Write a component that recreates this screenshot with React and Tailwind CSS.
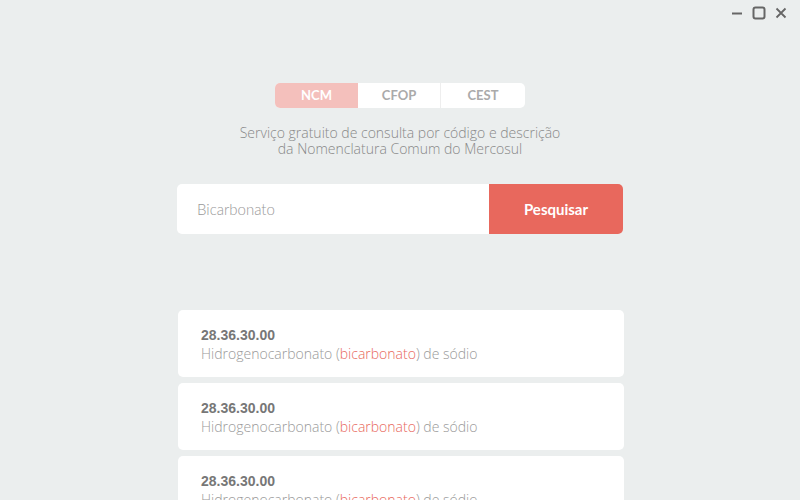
import React from "react";

const Card = () => (
  <div className="w-[446px] h-[67px] shrink-0 bg-white rounded-[5px] pl-[23px] pt-[16px]">
    <div className="text-[14px] font-bold text-[#777] leading-[18px]" style={{ fontFamily: '"Liberation Sans", Arial, sans-serif' }}>28.36.30.00</div>
    <div className="text-[14px] font-light text-[#999] leading-[18px] mt-[1px]" style={{ fontFamily: '"Open Sans", sans-serif' }}>
      Hidrogenocarbonato (<span className="text-[#e8685d]">bicarbonato</span>) de sódio
    </div>
  </div>
);

export default function App() {
  return (
    <div className="w-[800px] h-[500px] bg-[#ebeeee] overflow-hidden flex flex-col relative" style={{ fontFamily: 'Lato, sans-serif' }}>
      <div className="absolute top-[6px] right-[12px] flex items-center gap-[8px] text-[#666]">
        <svg width="14" height="14" viewBox="0 0 14 14"><path d="M2 7.5h10" stroke="#666" strokeWidth="2" /></svg>
        <svg width="14" height="14" viewBox="0 0 14 14"><rect x="1.5" y="1.5" width="11" height="11" rx="2" fill="none" stroke="#666" strokeWidth="2" /></svg>
        <svg width="14" height="14" viewBox="0 0 14 14"><path d="M2.5 2.5l9 9M11.5 2.5l-9 9" stroke="#666" strokeWidth="1.8" /></svg>
      </div>
      <div className="flex justify-center pt-[83px]">
        <div className="flex w-[250px] h-[25px] bg-white rounded-[5px] overflow-hidden text-[13px] font-bold">
          <div className="w-[83px] flex items-center justify-center bg-[#f4c0bc] text-white">NCM</div>
          <div className="w-[83px] flex items-center justify-center text-[#aaa] border-r border-[#eee]">CFOP</div>
          <div className="flex-1 flex items-center justify-center text-[#aaa]">CEST</div>
        </div>
      </div>
      <div className="mt-[17px] text-center text-[14px] leading-[16px] font-light text-[#888]" style={{ fontFamily: '"Open Sans", sans-serif' }}>
        <div>Serviço gratuito de consulta por código e descrição</div>
        <div>da Nomenclatura Comum do Mercosul</div>
      </div>
      <div className="flex justify-center mt-[27px]">
        <div className="flex w-[446px] h-[50px] rounded-[5px] overflow-hidden">
          <div className="flex-1 bg-white flex items-center pl-[20px] text-[15px] font-light text-[#999]">Bicarbonato</div>
          <div className="w-[134px] bg-[#e8685d] flex items-center justify-center text-white text-[15px] font-bold">Pesquisar</div>
        </div>
      </div>
      <div className="flex flex-col items-center gap-[6px] mt-[76px] pl-[2px]">
        <Card />
        <Card />
        <Card />
      </div>
    </div>
  );
}
